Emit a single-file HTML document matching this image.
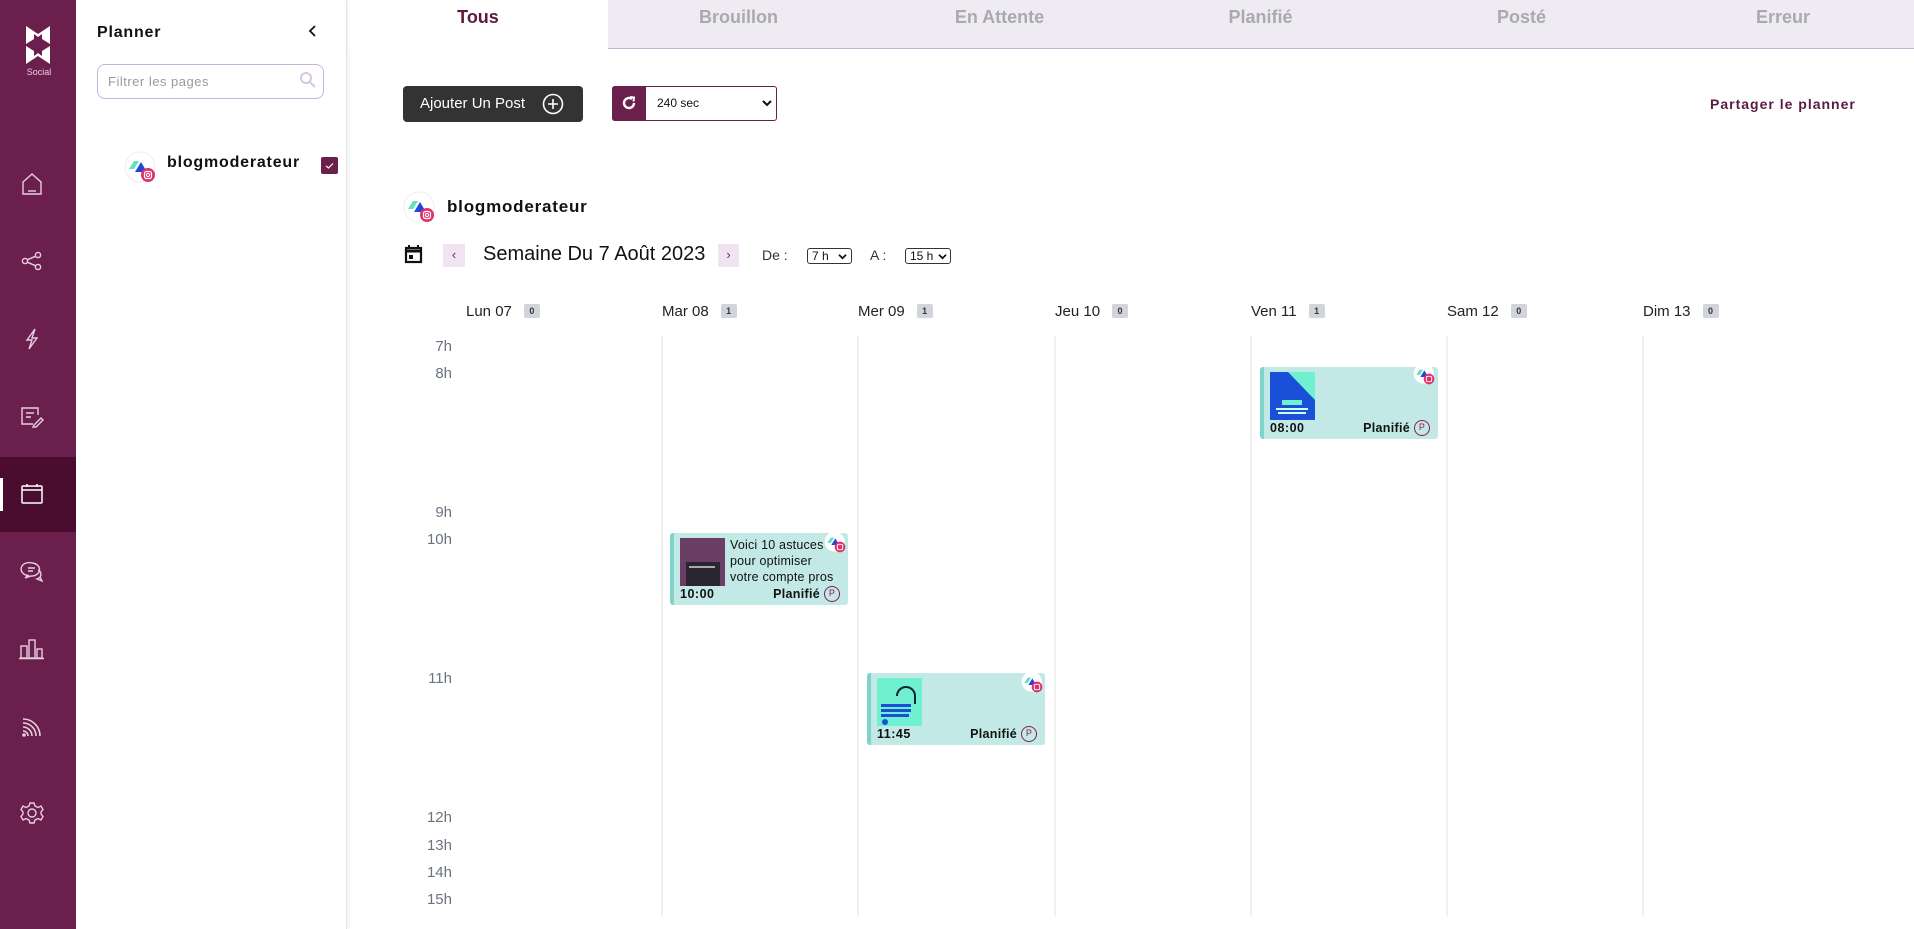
<!DOCTYPE html>
<html><head><meta charset="utf-8"><style>
*{box-sizing:border-box;margin:0;padding:0}
body{width:1914px;height:929px;overflow:hidden;background:#fff;font-family:"Liberation Sans",Arial,sans-serif;position:relative;color:#111}
.abs{position:absolute}
#side{left:0;top:0;width:76px;height:929px;background:#6b1f4c}
#active{left:0;top:457px;width:76px;height:75px;background:#4a0d30}
#activebar{left:0;top:478px;width:3px;height:33px;background:#fff}
.ic{position:absolute;left:16px;width:32px;height:32px}
#panel{left:76px;top:0;width:271px;height:929px;background:#fff;border-right:1px solid #e5e5e5;box-shadow:2px 0 4px rgba(0,0,0,.06)}
.tab{position:absolute;top:0;height:49px;width:261px;background:#efebf3;border-bottom:1px solid #c6b6d6;font-weight:bold;font-size:18px;color:#aaa;text-align:center;line-height:34px}
.hr{position:absolute;width:60px;left:392px;text-align:right;font-size:15px;color:#6b7280}
.day{position:absolute;top:303px;font-size:15px;color:#222}
.badge{display:inline-block;margin-left:12px;width:16px;height:14px;background:#d1d5db;border-radius:2px;font-size:9px;font-weight:bold;text-align:center;line-height:14px;vertical-align:2px;color:#333}
.vl{position:absolute;top:336px;height:580px;width:2px;background:#f0f0f0}
.card{position:absolute;width:178px;height:72px;background:#c2e9e6;border-left:4px solid #7fd4c9;border-radius:3px}
.card .t{position:absolute;left:6px;bottom:3px;font-size:12.5px;line-height:16px;font-weight:bold;letter-spacing:.5px}
.card .p{position:absolute;right:8px;bottom:3px;font-size:12.5px;line-height:16px;font-weight:bold;letter-spacing:.3px;height:16px}
.pc{display:inline-block;width:16px;height:16px;border:1.5px solid #8b1a5a;border-radius:50%;font-size:9px;line-height:13px;text-align:center;color:#8b1a5a;font-weight:normal;margin-left:4px;vertical-align:top}
.thumb{position:absolute;left:6px;top:5px;width:45px;height:48px}
</style></head><body>

<div id="side" class="abs"></div>
<div id="active" class="abs"></div>
<div id="activebar" class="abs"></div>
<svg class="abs" style="left:25px;top:25px" width="28" height="40" viewBox="0 0 28 40">
<path d="M1 1 L13 9 L25 1 L25 19 L17 14 L17 9 L13 12 L9 9 L9 14 L1 19 Z" fill="#fff"/>
<path d="M1 21 L9 26 L9 31 L13 28 L17 31 L17 26 L25 21 L25 39 L13 31 L1 39 Z" fill="#fff"/>
</svg>
<div class="abs" style="left:20px;top:67px;width:38px;text-align:center;font-size:9px;color:#e7cfe0">Social</div>
<svg class="ic" style="top:168px" viewBox="0 0 32 32" fill="none" stroke="#e8cfe0" stroke-width="1.4"><path d="M7 14 L16 6 L25 14 L25 26 L7 26 Z"/><path d="M12 23 H20"/></svg>
<svg class="ic" style="top:245px" viewBox="0 0 32 32" fill="none" stroke="#e8cfe0" stroke-width="1.4"><circle cx="9" cy="16" r="2.6"/><circle cx="22" cy="10" r="2.6"/><circle cx="22" cy="22" r="2.6"/><path d="M11.3 14.8 L19.7 11.2 M11.3 17.2 L19.7 20.8"/></svg>
<svg class="ic" style="top:323px" viewBox="0 0 32 32" fill="none" stroke="#e8cfe0" stroke-width="1.4"><path d="M19 6 L11 17 H16 L13 26 L21 15 H16 Z"/></svg>
<svg class="ic" style="top:400px" viewBox="0 0 32 32" fill="none" stroke="#e8cfe0" stroke-width="1.4"><path d="M17 24 H6 V8 H22 V15"/><path d="M10 13 H18 M10 17 H15"/><path d="M18 25 L25 18 L27 20 L20 27 L17 27 Z"/></svg>
<svg class="ic" style="top:478px" viewBox="0 0 32 32" fill="none" stroke="#fff" stroke-width="1.5"><rect x="6" y="8" width="20" height="17" rx="1"/><path d="M6 12 H26 M11 6 V9 M21 6 V9"/></svg>
<svg class="ic" style="top:555px" viewBox="0 0 32 32" fill="none" stroke="#e8cfe0" stroke-width="1.4"><path d="M16 8 A8 6.5 0 1 0 12 20.5 L9 23 L15 21 A8 6.5 0 0 0 16 8 Z"/><path d="M12 13 H19 M12 16 H17"/><path d="M22 15 A6 5 0 0 1 21 24 L26 26 L24 22"/></svg>
<svg class="ic" style="top:632px" viewBox="0 0 32 32" fill="none" stroke="#e8cfe0" stroke-width="1.4"><rect x="5" y="14" width="6" height="12"/><rect x="13" y="8" width="6" height="18"/><rect x="21" y="17" width="5" height="9"/><path d="M3 26.5 H28"/></svg>
<svg class="ic" style="top:710px" viewBox="0 0 32 32" fill="none" stroke="#e8cfe0" stroke-width="1.6"><path d="M7 9 A17 17 0 0 1 24 26 M7 13 A13 13 0 0 1 20 26 M7 17 A9 9 0 0 1 16 26 M7 21 A5 5 0 0 1 12 26"/><circle cx="8" cy="25" r="1" fill="#e8cfe0"/></svg>
<svg class="ic" style="top:797px" viewBox="0 0 32 32" fill="none" stroke="#e8cfe0" stroke-width="1.4"><path d="M14 6 H18 L19 9 L22 10.5 L25 9 L27 12.5 L25 15 V17 L27 19.5 L25 23 L22 21.5 L19 23 L18 26 H14 L13 23 L10 21.5 L7 23 L5 19.5 L7 17 V15 L5 12.5 L7 9 L10 10.5 L13 9 Z"/><circle cx="16" cy="16" r="4"/></svg>

<div id="panel" class="abs"></div>
<div class="abs" style="left:97px;top:24px;font-size:16px;font-weight:bold;letter-spacing:.8px">Planner</div>
<svg class="abs" style="left:306px;top:24px" width="14" height="14" viewBox="0 0 14 14"><path d="M9 2 L4 7 L9 12" fill="none" stroke="#111" stroke-width="1.8"/></svg>
<div class="abs" style="left:97px;top:64px;width:227px;height:35px;border:1px solid #c9b3dc;border-radius:8px"></div>
<div class="abs" style="left:108px;top:74px;font-size:13px;color:#9a9a9a;letter-spacing:.5px">Filtrer les pages</div>
<svg class="abs" style="left:299px;top:71px" width="18" height="18" viewBox="0 0 18 18" fill="none" stroke="#d6c6e6" stroke-width="2"><circle cx="7" cy="7" r="5"/><path d="M11 11 L16 16"/></svg>

<svg class="abs" style="left:124px;top:151px" width="36" height="36" viewBox="0 0 36 36"><circle cx="16" cy="16" r="15" fill="#fff" stroke="#eee"/><path d="M5 18 L10 10 L15 10 L10 18 Z" fill="#5fe0c0"/><path d="M11 21 L17 11 L23 21 Z" fill="#2446d8"/><circle cx="24" cy="24" r="7" fill="#e1306c"/><rect x="20.5" y="20.5" width="7" height="7" rx="2" fill="none" stroke="#fff" stroke-width="1.2"/><circle cx="24" cy="24" r="1.6" fill="none" stroke="#fff" stroke-width="1.1"/></svg>
<div class="abs" style="left:167px;top:154px;font-size:16px;font-weight:bold;letter-spacing:.8px">blogmoderateur</div>
<div class="abs" style="left:321px;top:157px;width:17px;height:17px;background:#6b1f4c;border-radius:2px"></div>
<svg class="abs" style="left:321px;top:157px" width="17" height="17" viewBox="0 0 17 17"><path d="M5 9 L7.5 11 L12 6.5" fill="none" stroke="#fff" stroke-width="1.2"/></svg>

<div class="tab" style="left:348px;background:#fff;border-bottom:none;border-right:1px solid #c6b6d6;color:#5c1a40">Tous</div>
<div class="tab" style="left:608px">Brouillon</div>
<div class="tab" style="left:869px">En Attente</div>
<div class="tab" style="left:1130px">Planifié</div>
<div class="tab" style="left:1391px">Posté</div>
<div class="tab" style="left:1652px;width:262px">Erreur</div>

<div class="abs" style="left:403px;top:86px;width:180px;height:36px;background:#333;border-radius:4px;color:#fff;font-size:15px;line-height:36px;padding-left:17px">Ajouter Un Post</div>
<svg class="abs" style="left:542px;top:93px" width="22" height="22" viewBox="0 0 22 22" fill="none" stroke="#fff" stroke-width="1.6"><circle cx="11" cy="11" r="9.5"/><path d="M11 6 V16 M6 11 H16"/></svg>
<div class="abs" style="left:612px;top:86px;width:165px;height:35px;border:1px solid #6b1f4c;border-radius:3px"></div>
<div class="abs" style="left:612px;top:86px;width:34px;height:35px;background:#6b1f4c;border-radius:3px 0 0 3px"></div>
<svg class="abs" style="left:620px;top:94px" width="18" height="18" viewBox="0 0 18 18" fill="none" stroke="#fff" stroke-width="2.4"><path d="M14 9 A5 5 0 1 1 12 5"/><path d="M10 3 L14 3.5 L13.5 7.5" stroke-width="2"/></svg>
<div class="abs" style="left:657px;top:96px;font-size:12px">240 sec</div>
<svg class="abs" style="left:762px;top:99px" width="10" height="8" viewBox="0 0 10 8"><path d="M1 2 L5 6 L9 2" fill="none" stroke="#111" stroke-width="2"/></svg>
<div class="abs" style="left:1710px;top:96px;font-size:14px;font-weight:bold;color:#5c1a40;letter-spacing:1px">Partager le planner</div>

<svg class="abs" style="left:403px;top:191px" width="36" height="36" viewBox="0 0 36 36"><circle cx="16" cy="16" r="15" fill="#fff" stroke="#eee"/><path d="M5 18 L10 10 L15 10 L10 18 Z" fill="#5fe0c0"/><path d="M11 21 L17 11 L23 21 Z" fill="#2446d8"/><circle cx="24" cy="24" r="7" fill="#e1306c"/><rect x="20.5" y="20.5" width="7" height="7" rx="2" fill="none" stroke="#fff" stroke-width="1.2"/><circle cx="24" cy="24" r="1.6" fill="none" stroke="#fff" stroke-width="1.1"/></svg>
<div class="abs" style="left:447px;top:197px;font-size:17px;font-weight:bold;letter-spacing:.8px">blogmoderateur</div>

<svg class="abs" style="left:403px;top:243px" width="22" height="22" viewBox="0 0 22 22"><rect x="3" y="5" width="15" height="14" fill="none" stroke="#111" stroke-width="2.2"/><path d="M3 8 H18" stroke="#111" stroke-width="3"/><path d="M6 2 V6 M15 2 V6" stroke="#111" stroke-width="2"/><rect x="6" y="12" width="4" height="4" fill="#111"/></svg>
<div class="abs" style="left:443px;top:244px;width:22px;height:23px;background:#f0e4f3;color:#8b1a5a;font-size:13px;text-align:center;line-height:22px">‹</div>
<div class="abs" style="left:483px;top:243px;font-size:20px">Semaine Du 7 Août 2023</div>
<div class="abs" style="left:718px;top:244px;width:21px;height:23px;background:#f0e4f3;color:#8b1a5a;font-size:13px;text-align:center;line-height:22px">›</div>
<div class="abs" style="left:762px;top:247px;font-size:14px;color:#333">De :</div>
<div class="abs" style="left:807px;top:248px;width:45px;height:16px;border:1px solid #333;border-radius:3px;font-size:12px;line-height:14px;padding-left:4px">7 h</div>
<svg class="abs" style="left:838px;top:253px" width="9" height="7" viewBox="0 0 10 8"><path d="M1 2 L5 6 L9 2" fill="none" stroke="#111" stroke-width="2"/></svg>
<div class="abs" style="left:870px;top:247px;font-size:14px;color:#333">A :</div>
<div class="abs" style="left:905px;top:248px;width:46px;height:16px;border:1px solid #333;border-radius:3px;font-size:12px;line-height:14px;padding-left:4px">15 h</div>
<svg class="abs" style="left:938px;top:253px" width="9" height="7" viewBox="0 0 10 8"><path d="M1 2 L5 6 L9 2" fill="none" stroke="#111" stroke-width="2"/></svg>

<div class="day" style="left:466px">Lun 07<span class="badge">0</span></div>
<div class="day" style="left:662px">Mar 08<span class="badge">1</span></div>
<div class="day" style="left:858px">Mer 09<span class="badge">1</span></div>
<div class="day" style="left:1055px">Jeu 10<span class="badge">0</span></div>
<div class="day" style="left:1251px">Ven 11<span class="badge">1</span></div>
<div class="day" style="left:1447px">Sam 12<span class="badge">0</span></div>
<div class="day" style="left:1643px">Dim 13<span class="badge">0</span></div>

<div class="vl" style="left:661px"></div><div class="vl" style="left:857px"></div><div class="vl" style="left:1054px"></div><div class="vl" style="left:1250px"></div><div class="vl" style="left:1446px"></div><div class="vl" style="left:1642px"></div>

<div class="hr" style="top:338px">7h</div>
<div class="hr" style="top:365px">8h</div>
<div class="hr" style="top:504px">9h</div>
<div class="hr" style="top:531px">10h</div>
<div class="hr" style="top:670px">11h</div>
<div class="hr" style="top:809px">12h</div>
<div class="hr" style="top:837px">13h</div>
<div class="hr" style="top:864px">14h</div>
<div class="hr" style="top:891px">15h</div>

<div class="card" style="left:1260px;top:367px">
 <svg class="thumb" viewBox="0 0 45 48"><rect width="45" height="48" fill="#6ff0d0"/><path d="M0 0 H18 L45 28 V48 H0 Z" fill="#1a4fd8"/><rect x="12" y="28" width="20" height="5" fill="#6ff0d0"/><rect x="6" y="36" width="32" height="2" fill="#cfe"/><rect x="8" y="40" width="28" height="2" fill="#cfe"/></svg>
 <div class="t">08:00</div><div class="p">Planifié<span class="pc">P</span></div>
</div>
<div class="card" style="left:670px;top:533px">
 <svg class="thumb" viewBox="0 0 45 48"><rect width="45" height="48" fill="#6b3f65"/><rect x="6" y="24" width="34" height="24" fill="#2a2530"/><rect x="9" y="28" width="26" height="2" fill="#aaa"/></svg>
 <div class="abs" style="left:56px;top:4px;font-size:12.5px;line-height:16px;letter-spacing:.2px">Voici 10 astuces<br>pour optimiser<br>votre compte pros</div>
 <div class="t">10:00</div><div class="p">Planifié<span class="pc">P</span></div>
</div>
<div class="card" style="left:867px;top:673px">
 <svg class="thumb" viewBox="0 0 45 48"><rect width="45" height="48" fill="#6ff0d0"/><path d="M20 18 A9 9 0 0 1 38 18 V26" fill="none" stroke="#123" stroke-width="2"/><rect x="4" y="26" width="30" height="3" fill="#1a4fd8"/><rect x="4" y="31" width="30" height="3" fill="#1a4fd8"/><rect x="4" y="36" width="28" height="3" fill="#1a4fd8"/><circle cx="8" cy="44" r="3" fill="#1a4fd8"/></svg>
 <div class="t">11:45</div><div class="p">Planifié<span class="pc">P</span></div>
</div>

<svg class="abs" style="left:1413px;top:363px" width="24" height="24" viewBox="0 0 36 36"><circle cx="16" cy="16" r="15" fill="#fff"/><path d="M5 18 L10 10 L15 10 L10 18 Z" fill="#5fe0c0"/><path d="M11 21 L17 11 L23 21 Z" fill="#2446d8"/><circle cx="24" cy="24" r="8" fill="#e1306c"/><rect x="20" y="20" width="8" height="8" rx="2" fill="none" stroke="#fff" stroke-width="1.4"/></svg>
<svg class="abs" style="left:824px;top:531px" width="24" height="24" viewBox="0 0 36 36"><circle cx="16" cy="16" r="15" fill="#fff"/><path d="M5 18 L10 10 L15 10 L10 18 Z" fill="#5fe0c0"/><path d="M11 21 L17 11 L23 21 Z" fill="#2446d8"/><circle cx="24" cy="24" r="8" fill="#e1306c"/><rect x="20" y="20" width="8" height="8" rx="2" fill="none" stroke="#fff" stroke-width="1.4"/></svg>
<svg class="abs" style="left:1021px;top:671px" width="24" height="24" viewBox="0 0 36 36"><circle cx="16" cy="16" r="15" fill="#fff"/><path d="M5 18 L10 10 L15 10 L10 18 Z" fill="#5fe0c0"/><path d="M11 21 L17 11 L23 21 Z" fill="#2446d8"/><circle cx="24" cy="24" r="8" fill="#e1306c"/><rect x="20" y="20" width="8" height="8" rx="2" fill="none" stroke="#fff" stroke-width="1.4"/></svg>

</body></html>
